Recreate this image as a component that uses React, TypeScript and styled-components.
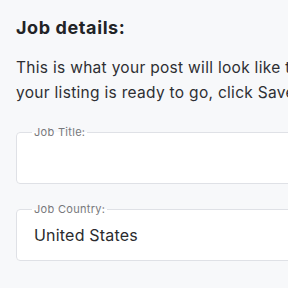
import React from "react";
import styled, { createGlobalStyle } from "styled-components";

const GlobalStyle = createGlobalStyle`
  html, body {
    margin: 0;
    padding: 0;
    background: #f7f8fa;
    overflow: hidden;
  }
  body {
    font-family: Inter, "Noto Sans", sans-serif;
  }
`;

const Page = styled.div`
  width: 560px;
  padding: 16px 16px 16px 16px;
  box-sizing: border-box;
`;

const Heading = styled.h2`
  margin: 0;
  font-size: 18px;
  line-height: 24px;
  font-weight: 700;
  letter-spacing: 0.6px;
  color: #222326;
`;

const Intro = styled.p`
  margin: 15px 0 21px 0;
  font-size: 15.5px;
  line-height: 25px;
  letter-spacing: 0.3px;
  color: #2e2f33;
`;

const Field = styled.fieldset<{ $last?: boolean }>`
  margin: 0 0 ${(p) => (p.$last ? 0 : 19)}px 0;
  padding: 0 15px 7px 15px;
  border: 1px solid #dfe1e6;
  border-radius: 4px;
  background: #ffffff;
`;

const Label = styled.legend`
  padding: 0 2px;
  font-size: 11px;
  line-height: 13px;
  letter-spacing: 0.3px;
  color: #77787c;
`;

const Input = styled.input`
  display: block;
  width: 100%;
  height: 37px;
  padding: 0 2px;
  border: none;
  outline: none;
  background: transparent;
  font-family: Inter, "Noto Sans", sans-serif;
  font-size: 16px;
  letter-spacing: 0.2px;
  color: #2a2b2e;
  box-sizing: border-box;
`;

const fields = [
  { label: "Job Title:", value: "" },
  { label: "Job Country:", value: "United States" },
];

const App = () => {
  return (
    <Page>
      <GlobalStyle />
      <Heading>Job details:</Heading>
      <Intro>
        This is what your post will look like to job seekers. Once you think
        your listing is ready to go, click Save to publish it.
      </Intro>
      {fields.map((f, i) => (
        <Field key={f.label} $last={i === fields.length - 1}>
          <Label>{f.label}</Label>
          <Input defaultValue={f.value} />
        </Field>
      ))}
    </Page>
  );
};

export default App;
